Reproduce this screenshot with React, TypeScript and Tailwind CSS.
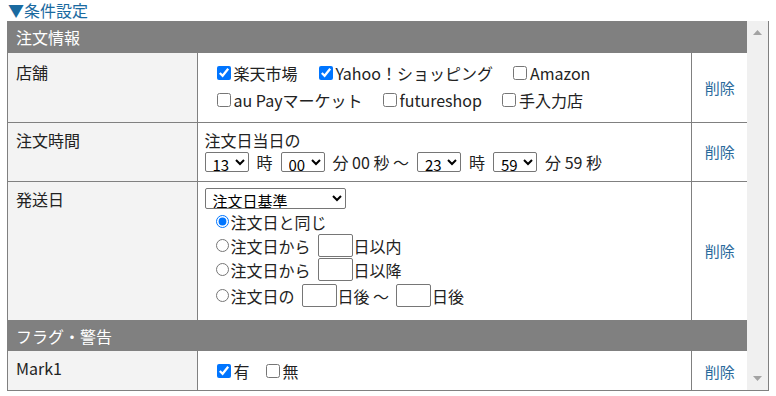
import React from 'react';

const jp = { fontFamily: '"Noto Sans CJK JP", "Noto Sans", sans-serif' };

function Check({ label, checked, className }: { label: string; checked?: boolean; className?: string }) {
  return (
    <label className={`inline-flex items-center ${className ?? ''}`}>
      <input type="checkbox" defaultChecked={checked} className="w-[14px] h-[14px] m-0 mr-[3px] accent-[#0075ff]" />
      <span>{label}</span>
    </label>
  );
}

function Radio({ checked, children }: { checked?: boolean; children: React.ReactNode }) {
  return (
    <div className="flex items-center h-[24px] pl-[11px]">
      <input type="radio" name="ship" defaultChecked={checked} className="w-[13px] h-[13px] m-0 mr-[2px] accent-[#0075ff]" />
      {children}
    </div>
  );
}

function Box() {
  return <input type="text" className="w-[35px] h-[23px] border border-[#767676] rounded-[2px] bg-white ml-[7px] mr-[1px] px-1 text-[14px]" />;
}

function Sel({ value, options, w }: { value: string; options: string[]; w: string }) {
  return (
    <select
      defaultValue={value}
      className={`${w} h-[20px] border border-[#767676] rounded-[2px] bg-white text-[15px] leading-none py-0 pl-[3px] pr-0 text-black`}
    >
      {options.map((o) => (
        <option key={o}>{o}</option>
      ))}
    </select>
  );
}

function DeleteCell() {
  return (
    <td className="w-[57px] text-center align-middle text-[#2a6a9c] border-b border-[#808080]">
      <a href="#" className="text-[15px]">削除</a>
    </td>
  );
}

const hours = Array.from({ length: 24 }, (_, i) => String(i).padStart(2, '0'));
const mins = Array.from({ length: 60 }, (_, i) => String(i).padStart(2, '0'));

export default function App() {
  return (
    <div className="w-[776px] h-[396px] bg-white text-[16px] text-[#222]" style={jp}>
      <div className="h-[21px] pl-[8px] pt-[1px] text-[16px] leading-[19px] text-[#1a6aa0]">▼条件設定</div>
      <div className="ml-[7px] w-[762px] h-[370px] border-x border-b border-[#808080] flex overflow-hidden">
        <div className="flex-1 overflow-hidden">
          <table className="w-[740px] border-collapse table-fixed">
            <colgroup>
              <col className="w-[189px]" />
              <col className="w-[494px]" />
              <col className="w-[57px]" />
            </colgroup>
            <tbody>
              <tr>
                <td colSpan={3} className="h-[32px] bg-[#808080] text-white pl-[8px] align-middle">注文情報</td>
              </tr>
              <tr>
                <td className="h-[69px] bg-[#f3f3f3] border-r border-b border-[#808080] align-top pl-[8px] pt-[8px] leading-[22px]">店舗</td>
                <td className="border-r border-b border-[#808080] align-top pl-[19px] pt-[9px]">
                  <div className="flex items-center h-[22px]">
                    <Check label="楽天市場" checked className="mr-[21px]" />
                    <Check label="Yahoo！ショッピング" checked className="mr-[20px]" />
                    <Check label="Amazon" />
                  </div>
                  <div className="flex items-center h-[22px] mt-[5px]">
                    <Check label="au Payマーケット" className="mr-[20px]" />
                    <Check label="futureshop" className="mr-[20px]" />
                    <Check label="手入力店" />
                  </div>
                </td>
                <DeleteCell />
              </tr>
              <tr>
                <td className="h-[59px] bg-[#f3f3f3] border-r border-b border-[#808080] align-top pl-[8px] pt-[6px] leading-[22px]">注文時間</td>
                <td className="border-r border-b border-[#808080] align-top pl-[7px] pt-[6px]">
                  <div className="leading-[22px]">注文日当日の</div>
                  <div className="flex items-center gap-[8px] h-[22px]">
                    <Sel value="13" options={hours} w="w-[44px]" />
                    <span>時</span>
                    <Sel value="00" options={mins} w="w-[44px]" />
                    <span>分 00 秒 ～</span>
                    <Sel value="23" options={hours} w="w-[44px]" />
                    <span>時</span>
                    <Sel value="59" options={mins} w="w-[44px]" />
                    <span>分 59 秒</span>
                  </div>
                </td>
                <DeleteCell />
              </tr>
              <tr>
                <td className="h-[139px] bg-[#f3f3f3] border-r border-b border-[#808080] align-top pl-[8px] pt-[6px] leading-[22px]">発送日</td>
                <td className="border-r border-b border-[#808080] align-top pl-[7px] pt-[6px]">
                  <select
                    defaultValue="注文日基準"
                    className="block w-[141px] h-[21px] border border-[#767676] rounded-[2px] bg-white text-[15px] leading-none py-0 pl-[3px] text-black"
                  >
                    <option>注文日基準</option>
                    <option>発送日基準</option>
                  </select>
                  <div className="mt-[1px]">
                    <Radio checked>注文日と同じ</Radio>
                    <Radio>
                      注文日から<Box />日以内
                    </Radio>
                    <Radio>
                      注文日から<Box />日以降
                    </Radio>
                    <div className="mt-[2px]">
                      <Radio>
                        注文日の<Box />日後 ～<Box />日後
                      </Radio>
                    </div>
                  </div>
                </td>
                <DeleteCell />
              </tr>
              <tr>
                <td colSpan={3} className="h-[31px] bg-[#808080] text-white pl-[8px] align-middle">フラグ・警告</td>
              </tr>
              <tr>
                <td className="h-[40px] bg-[#f3f3f3] border-r border-[#808080] align-top pl-[8px] pt-[6px] leading-[22px]">Mark1</td>
                <td className="border-r border-[#808080] align-top pl-[19px] pt-[9px]">
                  <div className="flex items-center h-[22px]">
                    <Check label="有" checked className="mr-[16px]" />
                    <Check label="無" />
                  </div>
                </td>
                <td className="text-center align-middle text-[#2a6a9c]">
                  <a href="#" className="text-[15px]">削除</a>
                </td>
              </tr>
            </tbody>
          </table>
        </div>
        <div className="w-[21px] bg-[#f0f0f0] flex flex-col justify-between items-center py-[9px]">
          <svg width="9" height="5" viewBox="0 0 9 5"><path d="M0 5 L4.5 0 L9 5 Z" fill="#a3a3a3" /></svg>
          <svg width="9" height="5" viewBox="0 0 9 5"><path d="M0 0 L9 0 L4.5 5 Z" fill="#a3a3a3" /></svg>
        </div>
      </div>
    </div>
  );
}
